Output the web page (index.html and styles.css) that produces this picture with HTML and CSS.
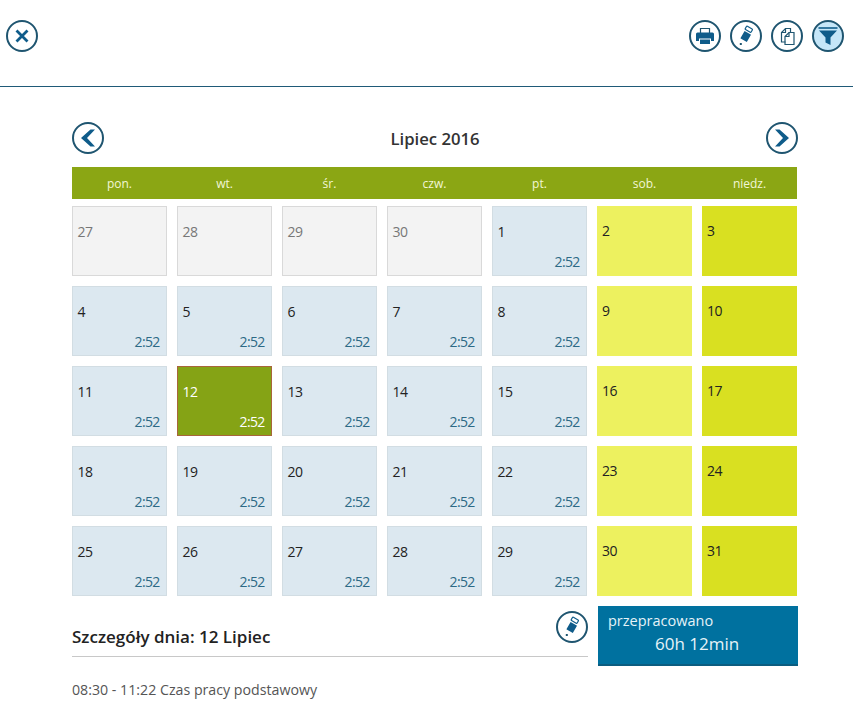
FILE: index.html
```html
<!DOCTYPE html>
<html lang="pl">
<head>
<meta charset="utf-8">
<title>Lipiec 2016</title>
<link rel="stylesheet" href="styles.css">
</head>
<body>
<svg class="defs" width="0" height="0" aria-hidden="true">
  <symbol id="pencil" viewBox="0 0 32 32">
    <rect x="12" y="12.200" width="7.400" height="8.600" rx=".4" transform="rotate(30 15.700 16.500)" fill="#0f5c8a"/>
    <rect x="15.400" y="7.400" width="6.800" height="3.800" rx=".7" transform="rotate(30 18.800 9.300)" fill="none" stroke="#0f5c8a" stroke-width="1.200"/>
    <rect x="9.800" y="23" width="2" height="2" fill="#1f5570"/>
  </symbol>
</svg>
<header class="topbar">
  <button class="icon"><svg viewBox="0 0 32 32"><path d="M10.500 10.500l11 11M21.500 10.500l-11 11" class="x"/></svg></button>
  <div class="tools">
    <button class="icon"><svg viewBox="0 0 32 32"><path d="M11.500 13V8.500h9V13" class="thin"/><path d="M8.500 12.500h15a1.500 1.500 0 0 1 1.500 1.500v7h-3v-2.500H10V21H7v-7a1.500 1.500 0 0 1 1.500-1.500z" class="solid"/><path d="M11 19.500h10v4.500H11z" class="solid"/></svg></button>
    <button class="icon"><svg viewBox="0 0 32 32"><use href="#pencil"/></svg></button>
    <button class="icon"><svg viewBox="0 0 32 32"><path d="M14.500 22H10.500v-9.500L14.500 8.500h5v4" class="thin"/><path d="M10.500 12.500h4v-4" class="thin"/><path d="M18 12.500h5v12h-9V16.500z" class="thin"/><path d="M18 12.500v4h-4" class="thin"/></svg></button>
    <button class="icon active"><svg viewBox="0 0 32 32"><path d="M6.500 8h19" class="bar"/><path d="M7 10.500h18l-6.500 7V25l-5-2.500v-5z" class="solid"/></svg></button>
  </div>
</header>

<main class="page">
  <div class="month">
    <button class="icon"><svg viewBox="0 0 32 32"><path d="M18.500 7.500L9 16l9.500 8.500h4.500L15 16l8-8.500z" class="solid"/></svg></button>
    <h1>Lipiec 2016</h1>
    <button class="icon"><svg viewBox="0 0 32 32"><path d="M13.500 7.500L23 16l-9.500 8.500H9L17 16 9 7.500z" class="solid"/></svg></button>
  </div>

  <div class="weekdays">
    <span>pon.</span><span>wt.</span><span>śr.</span><span>czw.</span><span>pt.</span><span>sob.</span><span>niedz.</span>
  </div>

  <div class="grid">
    <div class="cell other">27</div><div class="cell other">28</div><div class="cell other">29</div><div class="cell other">30</div>
    <div class="cell work">1<span class="time">2:52</span></div><div class="cell sat">2</div><div class="cell sun">3</div>

    <div class="cell work">4<span class="time">2:52</span></div><div class="cell work">5<span class="time">2:52</span></div><div class="cell work">6<span class="time">2:52</span></div><div class="cell work">7<span class="time">2:52</span></div>
    <div class="cell work">8<span class="time">2:52</span></div><div class="cell sat">9</div><div class="cell sun">10</div>

    <div class="cell work">11<span class="time">2:52</span></div><div class="cell today">12<span class="time">2:52</span></div><div class="cell work">13<span class="time">2:52</span></div><div class="cell work">14<span class="time">2:52</span></div>
    <div class="cell work">15<span class="time">2:52</span></div><div class="cell sat">16</div><div class="cell sun">17</div>

    <div class="cell work">18<span class="time">2:52</span></div><div class="cell work">19<span class="time">2:52</span></div><div class="cell work">20<span class="time">2:52</span></div><div class="cell work">21<span class="time">2:52</span></div>
    <div class="cell work">22<span class="time">2:52</span></div><div class="cell sat">23</div><div class="cell sun">24</div>

    <div class="cell work">25<span class="time">2:52</span></div><div class="cell work">26<span class="time">2:52</span></div><div class="cell work">27<span class="time">2:52</span></div><div class="cell work">28<span class="time">2:52</span></div>
    <div class="cell work">29<span class="time">2:52</span></div><div class="cell sat">30</div><div class="cell sun">31</div>
  </div>

  <section class="details">
    <div class="day">
      <div class="day-head">
        <h2>Szczegóły dnia: 12 Lipiec</h2>
        <button class="icon"><svg viewBox="0 0 32 32"><use href="#pencil"/></svg></button>
      </div>
      <p>08:30 - 11:22 Czas pracy podstawowy</p>
    </div>
    <div class="summary">
      <div>przepracowano</div>
      <div class="total">60h 12min</div>
    </div>
  </section>
</main>
</body>
</html>
```
FILE: styles.css
```css
* { box-sizing: border-box; }
html, body { margin: 0; height: 705px; overflow: hidden; background: #fff; }
body { font-family: "Open Sans", "Noto Sans", sans-serif; font-size: 14px; color: #333; }
.defs { position: absolute; }

.icon {
  width: 32px; height: 32px; padding: 0; flex: none;
  border: 2px solid #1f5570; border-radius: 50%;
  background: #fff; display: block;
}
.icon svg { display: block; width: 32px; height: 32px; margin: -2px; }
.icon.active { background: #c5e6f8; }
.x { fill: none; stroke: #0f5c8a; stroke-width: 2.8; }
.solid { fill: #0f5c8a; stroke: none; }
.thin { fill: none; stroke: #1f5570; stroke-width: 1.2; }
.bar { stroke: #0f5c8a; stroke-width: 1.6; fill: none; }

.topbar {
  height: 87px; padding: 20px 9px 0 6px;
  border-bottom: 1px solid #1f5a78;
  display: flex; justify-content: space-between; align-items: flex-start;
}
.tools { display: flex; gap: 9px; }

.page { width: 726px; margin-left: 72px; }
.month {
  height: 32px; margin-top: 35px;
  display: flex; justify-content: space-between; align-items: center;
}
.month h1 { margin: 0; font-size: 16.7px; font-weight: 600; color: #333; }

.weekdays {
  width: 725px; height: 32px; margin-top: 13px; background: #8ba614;
  display: grid; grid-template-columns: repeat(7, 95px); column-gap: 10px;
  align-items: center; text-align: center;
  font-size: 12px; color: #f2f6d6;
}

.grid {
  margin-top: 7px;
  display: grid; grid-template-columns: repeat(7, 95px); grid-auto-rows: 70px; gap: 10px;
}
.cell {
  position: relative; padding: 15px 4.5px 0; line-height: 19px;
  font-size: 14px; letter-spacing: -.4px; color: #222;
}
.other { background: #f3f3f3; border: 1px solid #d9d9d9; color: #777; }
.work { background: #dce8f0; border: 1px solid #d2dde3; color: #222; }
.sat { background: #edf15f; padding: 15px 5px 0; }
.sun { background: #d9e021; padding: 15px 5px 0; }
.today { background: #85a315; border: 1px solid #a8663a; color: #fff; }
.time {
  position: absolute; right: 6.500px; bottom: 4px; line-height: 19px;
  font-size: 14px; letter-spacing: -.7px; color: #2c6a86;
}
.today .time { color: #fff; }

.details { display: flex; gap: 10px; margin-top: 10px; }
.day { width: 516px; }
.day-head {
  height: 51px; padding-top: 5px; border-bottom: 1px solid #c8c8c8;
  display: flex; justify-content: space-between; align-items: flex-start;
}
.day-head h2 { margin: 15px 0 0; font-size: 17px; line-height: 22px; font-weight: 600; color: #222; }
.day p { margin: 23px 0 0; font-size: 14.200px; line-height: 19px; color: #555; }

.summary {
  width: 200px; height: 60px; padding: 5px 10px 0;
  background: #00719f; border-bottom: 2px solid #0c5d80;
  color: #e6f3f8; font-size: 14.500px; line-height: 20px;
}
.total { font-size: 17px; line-height: 26px; padding-left: 47px; }
```
